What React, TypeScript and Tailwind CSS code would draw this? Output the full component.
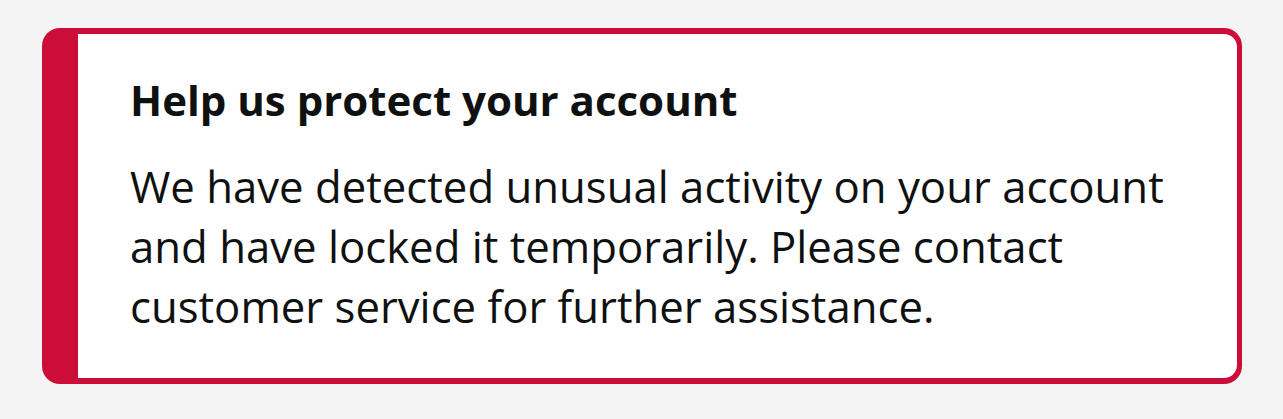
import React from "react";

export default function App() {
  return (
    <div className="min-h-screen bg-[#f4f4f4] px-[42px] pt-[28px] pb-[35px]" style={{ fontFamily: '"Open Sans", "Noto Sans", sans-serif' }}>
      <div className="w-[1200px] rounded-[18px] bg-[#cc0c39] pt-[6px] pb-[6px] pr-[5px] pl-[36px]">
        <div className="rounded-r-[13px] bg-white pl-[52px] pr-[50px] pt-[36px] pb-[42px] text-[#0f1111]">
          <h4 className="text-[42px] font-bold leading-[60px]">Help us protect your account</h4>
          <p className="mt-[26px] text-[43.7px] leading-[60px]">
            We have detected unusual activity on your account and have locked it temporarily. Please contact customer service for further assistance.
          </p>
        </div>
      </div>
    </div>
  );
}
